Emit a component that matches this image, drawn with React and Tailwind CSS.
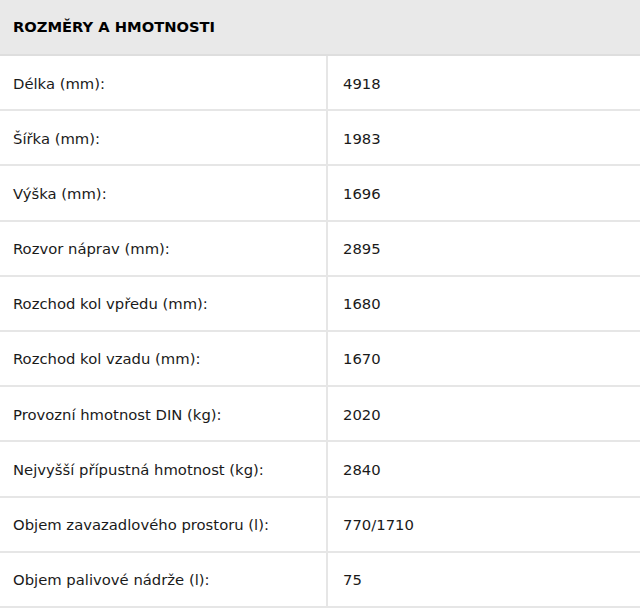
export default function App() {
  const rows = [
    ["Délka (mm):", "4918"],
    ["Šířka (mm):", "1983"],
    ["Výška (mm):", "1696"],
    ["Rozvor náprav (mm):", "2895"],
    ["Rozchod kol vpředu (mm):", "1680"],
    ["Rozchod kol vzadu (mm):", "1670"],
    ["Provozní hmotnost DIN (kg):", "2020"],
    ["Nejvyšší přípustná hmotnost (kg):", "2840"],
    ["Objem zavazadlového prostoru (l):", "770/1710"],
    ["Objem palivové nádrže (l):", "75"],
  ];
  return (
    <div className="w-[640px] h-[610px] bg-white text-[#1a1a1a] font-['DejaVu_Sans',sans-serif]">
      <div className="h-[56px] bg-[#e9e9e9] border-b-2 border-[#dedede] flex items-center pl-[13px] text-[14.7px] font-bold text-black">
        ROZMĚRY A HMOTNOSTI
      </div>
      {rows.map(([k, v]) => (
        <div key={k} className="h-[55.2px] flex border-b-2 border-[#e6e6e6] text-[14.8px]">
          <div className="w-[328px] border-r-2 border-[#e6e6e6] flex items-center pl-[13px] pt-[2px]">{k}</div>
          <div className="flex-1 flex items-center pl-[15px] pt-[2px]">{v}</div>
        </div>
      ))}
    </div>
  );
}
